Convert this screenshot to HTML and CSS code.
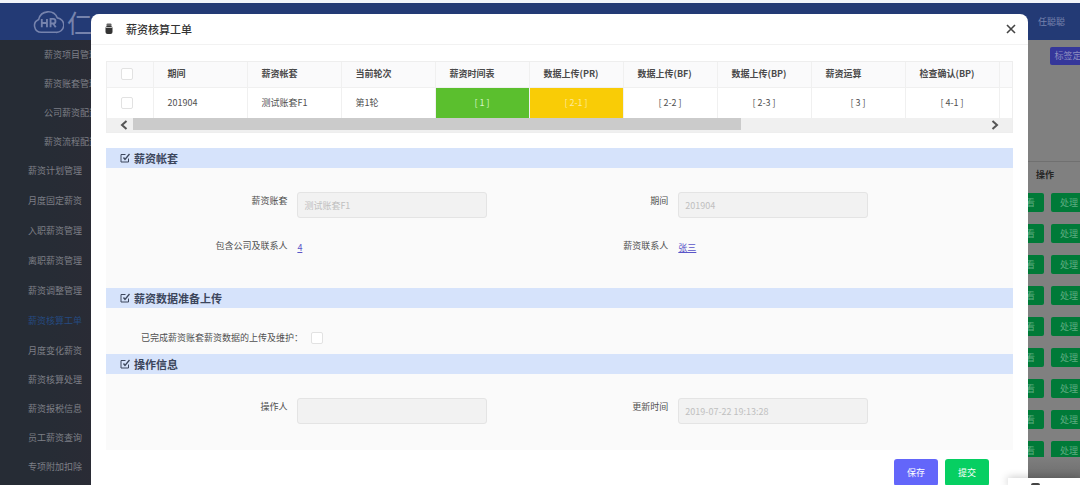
FILE: index.html
```html
<!DOCTYPE html>
<html lang="zh-CN">
<head>
<meta charset="utf-8">
<title>薪资核算工单</title>
<link rel="stylesheet" href="styles.css">
</head>
<body>
<div class="page">
  <header class="topbar">
    <div class="brand">
      <svg class="brand-logo" viewBox="0 0 30 25" aria-hidden="true">
        <path d="M8 22.500A6.500 6.500 0 0 1 5.500 10A9.500 9.500 0 0 1 23.500 8.500A7 7 0 0 1 22 22.500Z" fill="none" stroke="currentColor" stroke-width="1.500"/>
        <path d="M8.500 9.500v8M13.500 9.500v8M8.500 13.500h5M17 17.500v-8h2.500a2.200 2.200 0 0 1 0 4.500H17M19.500 14l2.500 3.500" fill="none" stroke="currentColor" stroke-width="1.800"/>
      </svg>
      <span>仁云</span>
    </div>
    <span class="user">任聪聪</span>
  </header>
  <div class="body">
    <nav class="sidebar">
      <ul class="menu sub">
        <li><a href="#">薪资项目管理</a></li>
        <li><a href="#">薪资账套管理</a></li>
        <li><a href="#">公司薪资配置</a></li>
        <li><a href="#">薪资流程配置</a></li>
      </ul>
      <ul class="menu main-menu">
        <li><a href="#">薪资计划管理</a></li>
        <li><a href="#">月度固定薪资</a></li>
        <li><a href="#">入职薪资管理</a></li>
        <li><a href="#">离职薪资管理</a></li>
        <li><a href="#">薪资调整管理</a></li>
        <li><a class="active" href="#">薪资核算工单</a></li>
      </ul>
      <ul class="menu">
        <li><a href="#">月度变化薪资</a></li>
        <li><a href="#">薪资核算处理</a></li>
        <li><a href="#">薪资报税信息</a></li>
        <li><a href="#">员工薪资查询</a></li>
        <li><a href="#">专项附加扣除</a></li>
      </ul>
    </nav>
    <main class="content">
      <button class="tag-button" type="button">标签定</button>
      <div class="list">
        <h2 class="list-title">操作</h2>
        <div class="actions">
          <button type="button">查看</button><button type="button">处理</button>
          <button type="button">查看</button><button type="button">处理</button>
          <button type="button">查看</button><button type="button">处理</button>
          <button type="button">查看</button><button type="button">处理</button>
          <button type="button">查看</button><button type="button">处理</button>
          <button type="button">查看</button><button type="button">处理</button>
          <button type="button">查看</button><button type="button">处理</button>
          <button type="button">查看</button><button type="button">处理</button>
          <button type="button">查看</button><button type="button">处理</button>
        </div>
      </div>
    </main>
  </div>
</div>

<svg class="symbols" aria-hidden="true">
  <symbol id="edit" viewBox="0 0 10 10">
    <path d="M8.500 5.500v3.500h-7.500v-7.500h4.500" fill="none" stroke="currentColor"/>
    <path d="M3.500 4.500l1.500 2L9.500 1" fill="none" stroke="currentColor" stroke-width="1.300"/>
  </symbol>
</svg>

<section class="modal" role="dialog" aria-labelledby="modal-title">
  <header class="modal-head">
    <svg class="modal-icon" viewBox="0 0 8 12" aria-hidden="true">
      <rect x="1.500" y="0.500" width="5" height="3" rx="1" fill="#666"/>
      <rect x="0.500" y="3" width="7" height="8" rx="2" fill="#333"/>
      <path d="M1 4.500h6" stroke="#bbb"/>
    </svg>
    <h1 id="modal-title">薪资核算工单</h1>
    <button class="close" type="button" aria-label="关闭">
      <svg viewBox="0 0 10 10"><path d="M1 1l8 8M9 1l-8 8" stroke="currentColor" stroke-width="1.600"/></svg>
    </button>
  </header>
  <div class="modal-body">
    <div class="grid-box">
      <table class="orders">
        <colgroup><col class="c-check"><col class="c"><col class="c"><col class="c"><col class="c"><col class="c"><col class="c"><col class="c"><col class="c"><col class="c"><col></colgroup>
        <thead>
          <tr><th><input type="checkbox" aria-label="全选"></th><th>期间</th><th>薪资帐套</th><th>当前轮次</th><th>薪资时间表</th><th>数据上传(PR)</th><th>数据上传(BF)</th><th>数据上传(BP)</th><th>薪资运算</th><th>检查确认(BP)</th><th></th></tr>
        </thead>
        <tbody>
          <tr><td><input type="checkbox" aria-label="选择 201904"></td><td>201904</td><td>测试账套F1</td><td>第1轮</td><td class="step done">[ 1 ]</td><td class="step current">[ 2-1 ]</td><td class="step">[ 2-2 ]</td><td class="step">[ 2-3 ]</td><td class="step">[ 3 ]</td><td class="step">[ 4-1 ]</td><td></td></tr>
        </tbody>
      </table>
      <div class="scroll">
        <button type="button" aria-label="向左"><svg viewBox="0 0 8 10"><path d="M6.500 1L2 5l4.500 4" fill="none" stroke="currentColor" stroke-width="2"/></svg></button>
        <div class="track"><div class="thumb"></div></div>
        <button type="button" aria-label="向右"><svg viewBox="0 0 8 10"><path d="M1.500 1L6 5L1.500 9" fill="none" stroke="currentColor" stroke-width="2"/></svg></button>
      </div>
    </div>

    <h2 class="bar"><svg><use href="#edit"/></svg>薪资帐套</h2>
    <div class="fields">
      <label for="account">薪资账套</label><div><input id="account" type="text" value="测试账套F1" disabled></div>
      <label for="period">期间</label><div><input id="period" type="text" value="201904" disabled></div>
      <span class="label">包含公司及联系人</span><div><a href="#">4</a></div>
      <span class="label">薪资联系人</span><div><a href="#">张三</a></div>
    </div>

    <h2 class="bar"><svg><use href="#edit"/></svg>薪资数据准备上传</h2>
    <div class="confirm">
      <label for="finished">已完成薪资账套薪资数据的上传及维护：</label>
      <input id="finished" type="checkbox">
    </div>

    <h2 class="bar"><svg><use href="#edit"/></svg>操作信息</h2>
    <div class="fields short">
      <label for="operator">操作人</label><div><input id="operator" type="text" disabled></div>
      <label for="updated">更新时间</label><div><input id="updated" type="text" value="2019-07-22 19:13:28" disabled></div>
    </div>
  </div>
  <footer class="modal-foot">
    <button class="save" type="button">保存</button>
    <button class="submit" type="button">提交</button>
  </footer>
</section>

<div class="corner-popup"><span></span></div>
</body>
</html>
```

FILE: styles.css
```css
* { box-sizing: border-box; }

body {
  margin: 0;
  height: 100vh;
  overflow: hidden;
  position: relative;
  font: 9px/14px "Noto Sans CJK SC", "Noto Sans", sans-serif;
  color: #505050;
  background: #808080;
}

h1, h2, ul { margin: 0; padding: 0; }
button, input { font: inherit; }
button { border: 0; padding: 0; }
.symbols { position: absolute; width: 0; height: 0; }

.page {
  display: flex;
  flex-direction: column;
  height: 100%;
  border-top: 3px solid #f2f4fa;
}

.topbar {
  flex: none;
  display: flex;
  justify-content: space-between;
  align-items: center;
  height: 37px;
  padding: 0 15px 0 33px;
  background: #233a75;
  color: #7683ad;
}

.brand {
  display: flex;
  align-items: center;
  gap: 3px;
  font-size: 25px;
  line-height: 36px;
}

.brand-logo { width: 31px; height: 26px; }

.body { flex: 1; display: flex; min-height: 0; }

.sidebar {
  flex: none;
  width: 110px;
  overflow: hidden;
  background: linear-gradient(90deg, #262c35 40%, #2b2b35);
}

.menu { list-style: none; padding-left: 28px; white-space: nowrap; }
.menu li { line-height: 29px; }
.menu a { color: #7d7f86; text-decoration: none; }
.menu.sub { padding-left: 44px; }
.main-menu li { line-height: 30px; }
.menu .active { color: #254a80; }

.content {
  flex: 1;
  display: flex;
  flex-direction: column;
  align-items: flex-end;
  padding-top: 7px;
  background: linear-gradient(#808080 415px, #6c6c6c 440px);
}

.tag-button {
  width: 36px;
  height: 18px;
  margin-right: -6px;
  border-radius: 2px;
  background: #35379a;
  color: #8d8ec0;
}

.list { margin-top: 96px; margin-right: -7px; border-top: 1px solid #707070; }
.list-title { padding: 6px 0 11px 28px; font-size: 9px; color: #262626; }

.actions {
  display: grid;
  grid-template-columns: 36px 36px;
  grid-auto-rows: 19px;
  gap: 12px 7px;
  max-height: 264px;
  overflow: hidden;
}

.actions button { border-radius: 2px; background: #007a38; color: #5eac80; }

.modal {
  position: absolute;
  top: 14px;
  left: 91px;
  right: 52px;
  border-radius: 8px 8px 0 0;
  background: #fff;
}

.modal-head {
  display: flex;
  align-items: center;
  height: 31px;
  padding: 0 12px 0 14px;
  border-bottom: 1px solid #f2f2f2;
}

.modal-icon { width: 8px; height: 12px; margin-right: 13px; }
.modal-head h1 { flex: 1; font-size: 11px; font-weight: 500; color: #333; }
.close { width: 10px; height: 10px; background: none; color: #444; }
.close svg { display: block; }

.modal-body { padding: 16px 15px 0; }
.grid-box { margin-bottom: 15px; border: 1px solid #eee; }

.orders { width: 100%; table-layout: fixed; border-collapse: collapse; }
.c-check { width: 46px; }
.c { width: 94px; }

.orders th, .orders td {
  padding: 0 0 0 14px;
  border-right: 1px solid #f0f0f0;
  text-align: left;
  white-space: nowrap;
}

.orders th { height: 25px; background: #fafafb; color: #4a4a4a; border-bottom: 1px solid #f0f0f0; }
.orders td { height: 31px; }
.orders th:last-child, .orders td:last-child { padding: 0; border-right: 0; }
.orders .step { padding: 0; text-align: center; }
.orders .done { background: #5bbf2e; color: #d8f5c6; }
.orders .current { background: #f9cc06; color: #fdea9c; }

input[type="checkbox"] {
  appearance: none;
  display: block;
  width: 12px;
  height: 12px;
  margin: 0;
  border: 1px solid #e2e2e2;
  border-radius: 2px;
  background: #fff;
}

.scroll { display: flex; height: 14px; background: #f0f0f0; }
.scroll button { width: 26px; padding-left: 8px; background: none; color: #555; }
.scroll button:last-child { width: 34px; padding: 0; }
.scroll svg { display: block; width: 8px; height: 10px; margin: 0 auto; }
.track { flex: 1; }
.thumb { width: 72%; height: 12px; background: #cbcbcb; }

.bar {
  display: flex;
  align-items: center;
  gap: 4px;
  height: 20px;
  padding-left: 14px;
  background: #d6e3fb;
  font-size: 11px;
  color: #3c465c;
}

.bar svg { width: 10px; height: 10px; }

.fields {
  display: grid;
  grid-template-columns: 20% 22% 20% 22%;
  row-gap: 19px;
  padding: 24px 0 33px;
  background: #fafafa;
}

.fields.short { padding-bottom: 26px; }
.fields label, .fields .label { padding-top: 2px; text-align: right; }
.fields div { padding-left: 10px; }
.fields a { display: inline-block; padding-top: 4px; color: #5a55c8; text-decoration: underline; }

.fields input {
  display: block;
  width: 100%;
  height: 26px;
  padding: 0 6px;
  border: 1px solid #e4e4e4;
  border-radius: 3px;
  background: #f2f2f2;
  color: #c0c0c0;
}

.confirm {
  display: flex;
  align-items: center;
  gap: 8px;
  padding: 23px 0 9px 35px;
  background: #fafafa;
}

.modal-foot {
  display: flex;
  justify-content: flex-end;
  gap: 7px;
  padding: 9px 39px 20px 0;
}

.modal-foot button { width: 44px; height: 27px; border-radius: 3px; color: #fff; }
.modal-foot .save { background: #6366fa; }
.modal-foot .submit { background: #06cf62; }

.corner-popup {
  position: absolute;
  right: 0;
  bottom: 0;
  width: 72px;
  height: 7px;
  padding: 5px 0 0 23px;
  background: #fff;
  box-shadow: 0 0 8px #0004;
}

.corner-popup span { display: block; width: 9px; height: 2px; border-radius: 5px 5px 0 0; background: #444; }
```
